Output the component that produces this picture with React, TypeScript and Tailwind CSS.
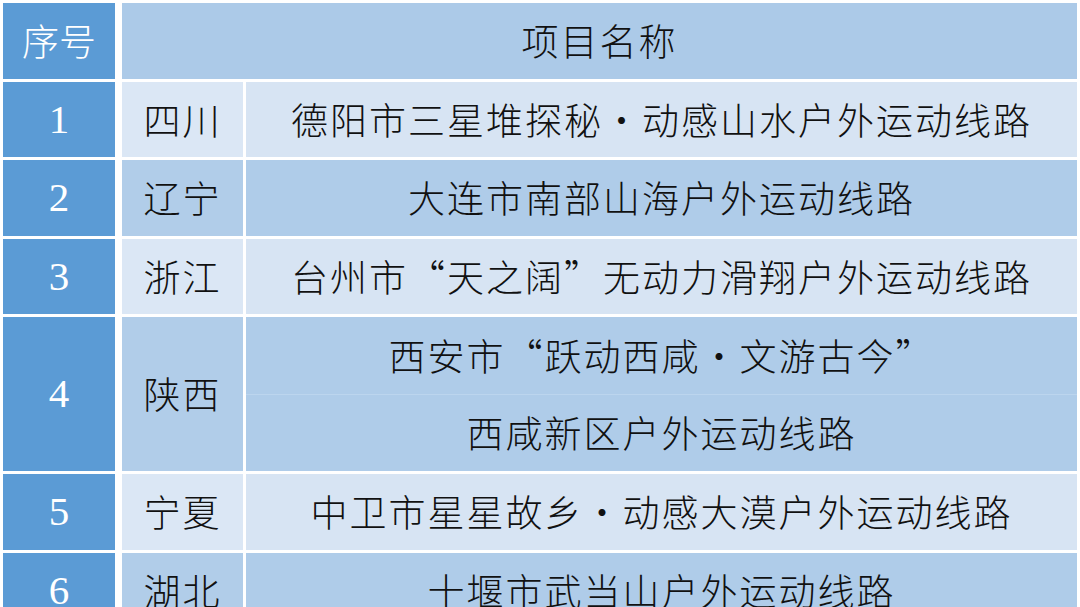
import React from "react";

const cjk = "font-['Noto_Sans_CJK_SC','Noto_Sans',sans-serif] font-light";
const serif = "font-['Liberation_Serif','Times_New_Roman',serif]";

type Row = { n: string; prov: string; lines: string[]; light: boolean };

const rows: Row[] = [
  { n: "1", prov: "四川", lines: ["德阳市三星堆探秘·动感山水户外运动线路"], light: true },
  { n: "2", prov: "辽宁", lines: ["大连市南部山海户外运动线路"], light: false },
  { n: "3", prov: "浙江", lines: ["台州市“天之阔”无动力滑翔户外运动线路"], light: true },
  { n: "4", prov: "陕西", lines: ["西安市“跃动西咸·文游古今”", "西咸新区户外运动线路"], light: false },
  { n: "5", prov: "宁夏", lines: ["中卫市星星故乡·动感大漠户外运动线路"], light: true },
  { n: "6", prov: "湖北", lines: ["十堰市武当山户外运动线路"], light: false },
];

export default function App() {
  return (
    <div className="w-[1080px] h-[607px] overflow-hidden bg-white">
      <div className="grid grid-cols-[116px_121px_831px] auto-rows-[75.5px] gap-x-[3px] gap-y-[3px] pl-[3px] pt-[3px]">
        <div className={`w-[112px] bg-[#5b9bd5] flex items-center justify-center text-white text-[37px] ${cjk}`}>
          序号
        </div>
        <div className={`col-span-2 bg-[#accae8] flex items-center justify-center text-[#111111] text-[37px] tracking-[2px] ${cjk}`}>
          项目名称
        </div>
        {rows.map((r) => {
          const span = r.lines.length === 2 ? "row-span-2" : "";
          const bg3 = r.light ? "bg-[#d7e4f3]" : "bg-[#afcce9]";
          const bg2 = r.light ? "bg-[#dbe7f5]" : "bg-[#b1cde9]";
          return (
            <React.Fragment key={r.n}>
              <div className={`${span} w-[112px] bg-[#5b9bd5] flex items-center justify-center text-white text-[41px] ${serif}`}>
                {r.n}
              </div>
              <div className={`${span} ${bg2} flex items-center justify-center text-[#111111] text-[37px] tracking-[2px] ${cjk}`}>
                {r.prov}
              </div>
              {r.lines.length === 2 ? (
                <div className={`row-span-2 ${bg3} flex flex-col text-[#111111] text-[37px] tracking-[2px] ${cjk}`}>
                  <div className="flex-1 flex items-center justify-center border-b border-[#bcd5ee]">{r.lines[0]}</div>
                  <div className="flex-1 flex items-center justify-center">{r.lines[1]}</div>
                </div>
              ) : (
                <div className={`${bg3} flex items-center justify-center text-[#111111] text-[37px] tracking-[2px] whitespace-nowrap ${cjk}`}>
                  {r.lines[0]}
                </div>
              )}
            </React.Fragment>
          );
        })}
      </div>
    </div>
  );
}
